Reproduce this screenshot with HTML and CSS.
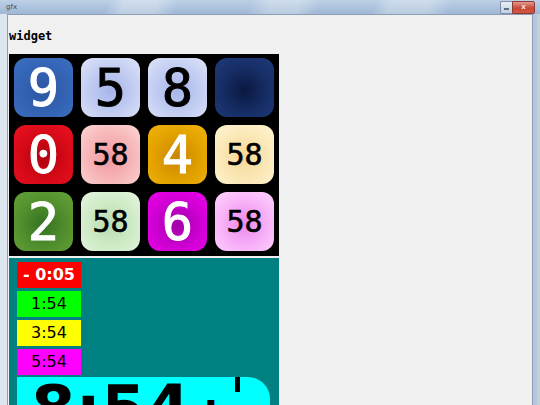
FILE: index.html
```html
<!DOCTYPE html>
<html>
<head>
<meta charset="utf-8">
<link rel="stylesheet" href="styles.css">
</head>
<body>
<div class="window">
  <div class="titlebar">
    <span class="title">gfx</span>
    <div class="buttons">
      <span class="btn-min"><span class="min-bar"></span></span>
      <span class="btn-close">x</span>
    </div>
  </div>
  <div class="frame">
    <div class="client">
      <h1 class="heading">widget</h1>
      <div class="tiles">
        <div class="tile t-blue light-text big">9</div>
        <div class="tile t-lav big">5</div>
        <div class="tile t-lav big">8</div>
        <div class="tile t-navy"></div>
        <div class="tile t-red light-text big">0</div>
        <div class="tile t-pink small">58</div>
        <div class="tile t-yellow light-text big">4</div>
        <div class="tile t-cream small">58</div>
        <div class="tile t-green light-text big">2</div>
        <div class="tile t-mint small">58</div>
        <div class="tile t-magenta light-text big">6</div>
        <div class="tile t-orchid small">58</div>
      </div>
      <div class="panel">
        <div class="time t-r">- 0:05</div>
        <div class="time t-g">1:54</div>
        <div class="time t-y">3:54</div>
        <div class="time t-m">5:54</div>
        <div class="clock">
          <span class="clock-big">8:54</span><span class="clock-small"> in</span>
          <span class="clock-mark"></span>
        </div>
      </div>
    </div>
  </div>
</div>
</body>
</html>
```

FILE: styles.css
```css
html, body {
  margin: 0;
  padding: 0;
  background: #dbe4ee;
}
.window {
  width: 540px;
  height: 405px;
  overflow: hidden;
  background: #d9e3ee;
  display: flex;
  flex-direction: column;
}
.titlebar {
  height: 14px;
  flex: none;
  display: flex;
  align-items: flex-start;
  justify-content: space-between;
  background:
    linear-gradient(110deg, rgba(255,255,255,0) 0 20%, rgba(255,255,255,0.3) 23% 29%, rgba(255,255,255,0) 33% 46%, rgba(255,255,255,0.28) 50% 55%, rgba(255,255,255,0) 59% 69%, rgba(255,255,255,0.28) 72% 79%, rgba(255,255,255,0) 83%),
    linear-gradient(180deg, #bdd0e6 0%, #9fb8d6 100%);
}
.title {
  font-family: "DejaVu Sans", sans-serif;
  font-size: 7px;
  color: #4a4a4a;
  margin: 3px 0 0 6px;
  line-height: 8px;
}
.buttons {
  display: flex;
  margin-right: 5px;
  margin-top: 1px;
}
.btn-min {
  width: 11px;
  height: 11px;
  border: 1px solid #7d8ea6;
  border-right: none;
  border-radius: 2px 0 0 2px;
  background: linear-gradient(180deg, #e6edf5, #c2d0e2);
  display: flex;
  align-items: flex-end;
  justify-content: center;
}
.min-bar {
  width: 5px;
  height: 2px;
  background: #5b6b80;
  margin-bottom: 3px;
}
.btn-close {
  width: 21px;
  height: 11px;
  border: 1px solid #8e3b34;
  border-radius: 0 2px 2px 0;
  background: linear-gradient(180deg, #e3998e, #c9483a 55%, #d0563f);
  color: #f6e3df;
  font-family: "DejaVu Sans", sans-serif;
  font-size: 7px;
  font-weight: bold;
  line-height: 10px;
  text-align: center;
}
.frame {
  flex: 1;
  display: flex;
  padding: 0 7px 0 7px;
  background: linear-gradient(90deg, #dde5ef 0 7px, transparent 7px calc(100% - 7px), #b3c6de calc(100% - 7px) calc(100% - 3px), #c9cfd6 calc(100% - 3px));
}
.client {
  flex: 1;
  background: #f0f0f0;
  border: 1px solid #8e9db2;
  border-bottom: none;
  padding: 14px 0 0 1px;
  min-width: 0;
}
.heading {
  margin: 0;
  font-family: "DejaVu Sans Mono", monospace;
  font-size: 12px;
  font-weight: bold;
  line-height: 14px;
  color: #000;
}
.tiles {
  margin-top: 11px;
  width: 260px;
  background: #000;
  padding: 4px 5px 5px 5px;
  display: grid;
  grid-template-columns: repeat(4, 59px);
  grid-auto-rows: 59px;
  column-gap: 8px;
  row-gap: 8px;
}
.tile {
  border-radius: 12px;
  display: flex;
  align-items: center;
  justify-content: center;
  font-family: "DejaVu Sans Mono", monospace;
  color: #000;
  -webkit-text-stroke: 1px currentColor;
}
.big { font-size: 52px; }
.small { font-size: 30px; -webkit-text-stroke: 0.6px currentColor; }
.light-text { color: #fff; }
.t-blue { background: radial-gradient(circle at 50% 55%, #2b56a3 0%, #3565b6 60%, #3c6fc2 100%); }
.t-lav { background: radial-gradient(circle at 50% 55%, #a6b6ea 0%, #c4cef2 55%, #dfe4f8 100%); }
.t-navy { background: radial-gradient(circle at 50% 55%, #0a1840 0%, #172f68 55%, #1f3b7c 100%); }
.t-red { background: radial-gradient(circle at 50% 55%, #b0000e 0%, #d80a18 55%, #ea1220 100%); }
.t-pink { background: radial-gradient(circle at 50% 55%, #f098a0 0%, #f7b8ba 55%, #fdd6d4 100%); }
.t-yellow { background: radial-gradient(circle at 50% 55%, #c98400 0%, #e2a200 55%, #f0b408 100%); }
.t-cream { background: radial-gradient(circle at 50% 55%, #f4d898 0%, #fbe8b8 55%, #fff5d2 100%); }
.t-green { background: radial-gradient(circle at 50% 55%, #357222 0%, #52902e 55%, #64a437 100%); }
.t-mint { background: radial-gradient(circle at 50% 55%, #b8deb0 0%, #d0ebc8 55%, #e6f5e0 100%); }
.t-magenta { background: radial-gradient(circle at 50% 55%, #a000a8 0%, #d000d4 55%, #ee00ee 100%); }
.t-orchid { background: radial-gradient(circle at 50% 55%, #ec88ec 0%, #f8b4f8 55%, #ffd2ff 100%); }
.panel {
  margin-top: 2px;
  width: 270px;
  height: 200px;
  background: #008080;
  padding: 4px 9px 0 8px;
  box-sizing: border-box;
  display: flex;
  flex-direction: column;
  align-items: flex-start;
  gap: 3px;
}
.time {
  width: 64px;
  height: 26px;
  font-family: "DejaVu Sans", sans-serif;
  font-size: 16px;
  line-height: 26px;
  text-align: center;
  color: #000;
}
.t-r { background: #ff0000; color: #fff; font-weight: bold; }
.t-g { background: #00ff00; }
.t-y { background: #ffff00; }
.t-m { background: #ff00ff; }
.clock {
  position: relative;
  margin-top: -1px;
  align-self: stretch;
  height: 80px;
  background: #00ffff;
  border-radius: 0 22px 0 0;
  padding-left: 14px;
  font-family: "DejaVu Sans", sans-serif;
  font-weight: bold;
  color: #000;
  line-height: 64px;
  white-space: nowrap;
}
.clock-big { font-size: 64px; }
.clock-small { font-size: 40px; }
.clock-mark {
  position: absolute;
  left: 218px;
  top: 0;
  width: 5px;
  height: 15px;
  background: #000;
}
```
